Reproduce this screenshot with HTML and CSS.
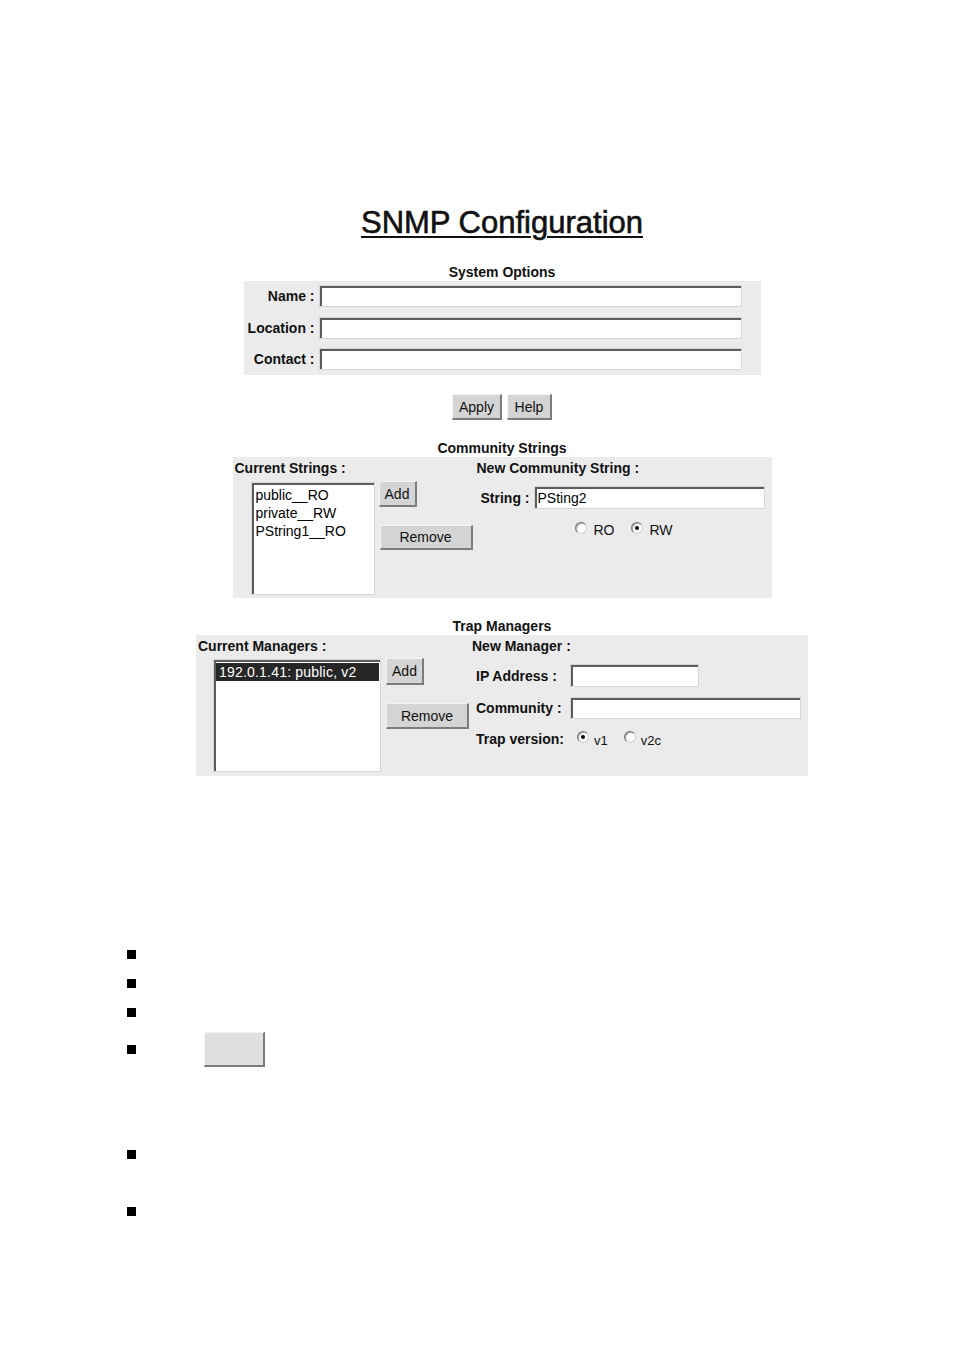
FILE: index.html
```html
<!DOCTYPE html>
<html>
<head>
<meta charset="utf-8">
<title>SNMP Configuration</title>
<link rel="stylesheet" href="styles.css">
</head>
<body>
<div class="page">
  <h1 class="title">SNMP Configuration</h1>

  <h2 class="sec-title sec-sys">System Options</h2>
  <div class="panel panel-sys">
    <label class="lbl lbl-right">Name :</label><input class="field" type="text">
    <label class="lbl lbl-right">Location :</label><input class="field" type="text">
    <label class="lbl lbl-right">Contact :</label><input class="field" type="text">
  </div>

  <div class="actions">
    <button class="btn btn-apply">Apply</button>
    <button class="btn btn-help">Help</button>
  </div>

  <h2 class="sec-title sec-comm">Community Strings</h2>
  <div class="panel panel-comm">
    <div class="col">
      <div class="col-head head-left">Current Strings :</div>
      <div class="list-row list-row-comm">
        <div class="listbox lb-strings">
          <div class="opt">public__RO</div>
          <div class="opt">private__RW</div>
          <div class="opt">PString1__RO</div>
        </div>
        <div class="btn-col btn-col-comm">
          <button class="btn btn-add">Add</button>
          <button class="btn btn-remove-comm">Remove</button>
        </div>
      </div>
    </div>
    <div class="col">
      <div class="col-head">New Community String :</div>
      <div class="field-row">
        <label class="lbl">String :</label>
        <input class="field field-string" type="text" value="PSting2">
      </div>
      <div class="radio-row">
        <span class="radio-opt"><span class="radio"></span><span class="rtext">RO</span></span>
        <span class="radio-opt"><span class="radio on"></span><span class="rtext">RW</span></span>
      </div>
    </div>
  </div>

  <h2 class="sec-title sec-trap">Trap Managers</h2>
  <div class="panel panel-trap">
    <div class="col">
      <div class="col-head head-left">Current Managers :</div>
      <div class="list-row list-row-trap">
        <div class="listbox lb-managers">
          <div class="opt selected">192.0.1.41: public, v2</div>
        </div>
        <div class="btn-col btn-col-trap">
          <button class="btn btn-add btn-add-trap">Add</button>
          <button class="btn btn-remove-trap">Remove</button>
        </div>
      </div>
    </div>
    <div class="col">
      <div class="col-head">New Manager :</div>
      <div class="trow trow-ip">
        <label class="lbl tlbl">IP Address :</label>
        <input class="field field-ip" type="text">
      </div>
      <div class="trow trow-comm">
        <label class="lbl tlbl">Community :</label>
        <input class="field field-comm" type="text">
      </div>
      <div class="trow trow-ver">
        <label class="lbl tlbl">Trap version:</label>
        <span class="ver-radios">
          <span class="radio-opt small"><span class="radio on"></span><span class="rtext vtext">v1</span></span>
          <span class="radio-opt small"><span class="radio"></span><span class="rtext vtext">v2c</span></span>
        </span>
      </div>
    </div>
  </div>
</div>

<ul class="bullets">
  <li class="b1"><span class="sq"></span></li>
  <li class="b2"><span class="sq"></span></li>
  <li class="b3"><span class="sq"></span></li>
  <li class="b4"><span class="sq"></span><span class="blank-btn"></span></li>
  <li class="b5"><span class="sq"></span></li>
  <li class="b6"><span class="sq"></span></li>
</ul>
</body>
</html>
```

FILE: styles.css
```css
html, body {
  margin: 0;
  padding: 0;
  background: #ffffff;
}
body {
  font-family: "Liberation Sans", Arial, sans-serif;
  color: #000;
  font-size: 14px;
}

.page {
  width: 612px;
  margin-left: 196px;
  padding-top: 205px;
}

.title {
  margin: 0;
  font-size: 31px;
  font-weight: normal;
  line-height: 36px;
  text-align: center;
  text-decoration: underline;
  text-decoration-thickness: 2px;
  text-underline-offset: 3px;
  color: #111;
  -webkit-text-stroke: 0.6px #111;
}

.sec-title {
  margin: 0;
  font-size: 14px;
  font-weight: bold;
  line-height: 18px;
  text-align: center;
  color: #111;
}
.sec-sys { margin-top: 22px; }
.sec-comm { margin-top: 19px; }
.sec-trap { margin-top: 19px; }

.panel {
  background: #ebebeb;
  margin: 0 auto;
  box-sizing: border-box;
}

.lbl {
  font-weight: bold;
  font-size: 14px;
  line-height: 16px;
  white-space: nowrap;
  color: #111;
}
.lbl-right { text-align: right; }

.field {
  box-sizing: border-box;
  margin: 0;
  padding: 0 0 0 3px;
  background: #fff;
  border: 1px solid #d6d6d6;
  box-shadow: inset 2px 2px 0 #5c5c5c;
  font-family: "Liberation Sans", Arial, sans-serif;
  font-size: 14px;
  color: #000;
  outline: none;
  border-radius: 0;
}

/* System options */
.panel-sys {
  width: 517px;
  height: 94px;
  display: grid;
  grid-template-columns: 71px 423px;
  grid-auto-rows: 22px;
  column-gap: 4px;
  row-gap: 9.5px;
  padding: 4px 0 5px 0;
  align-items: center;
}
.panel-sys .field { height: 22px; width: 423px; }

/* Buttons */
.actions {
  display: flex;
  justify-content: center;
  gap: 5px;
  margin-top: 19px;
}
.btn {
  box-sizing: border-box;
  margin: 0;
  padding: 0;
  height: 26px;
  background: #d4d4d4;
  border-top: 1px solid #f4f4f4;
  border-left: 1px solid #f4f4f4;
  border-right: 2px solid #7c7c7c;
  border-bottom: 2px solid #7c7c7c;
  border-radius: 0;
  font-family: "Liberation Sans", Arial, sans-serif;
  font-size: 14px;
  color: #111;
  display: inline-flex;
  align-items: center;
  justify-content: center;
}
.btn-apply { width: 50px; }
.btn-help { width: 45px; }
.btn-add { width: 38px; height: 26px; }
.btn-add-trap { height: 27px; }
.btn-remove-comm { width: 93px; height: 25px; margin-left: 1px; }
.btn-remove-trap { width: 83px; height: 26px; }

/* Community / Trap panels */
.panel-comm {
  width: 539px;
  height: 141px;
  display: grid;
  grid-template-columns: 244px 1fr;
  padding: 3px 0 3px 0;
}
.panel-trap {
  width: 612px;
  height: 141px;
  display: grid;
  grid-template-columns: 276px 1fr;
  padding: 3px 0 4px 0;
}

.col-head {
  font-weight: bold;
  font-size: 14px;
  line-height: 17px;
  white-space: nowrap;
  color: #111;
}
.head-left { padding-left: 2px; }

.list-row {
  display: flex;
  align-items: flex-start;
}
.list-row-comm { margin-top: 5px; padding-left: 18px; }
.list-row-trap { margin-top: 4px; padding-left: 17px; }

.listbox {
  box-sizing: border-box;
  background: #fff;
  border: 1px solid #d6d6d6;
  box-shadow: inset 2px 2px 0 #5c5c5c;
  padding: 3px 1px 1px 2px;
  overflow: hidden;
}
.lb-strings { width: 124px; height: 113px; }
.lb-managers { width: 168px; height: 113px; padding-top: 3px; }

.opt {
  font-size: 14px;
  line-height: 18px;
  padding: 0 2px;
  white-space: nowrap;
}
.lb-managers .opt { padding: 0 3px; letter-spacing: 0.2px; }
.opt.selected {
  background: #262626;
  color: #fff;
}

.btn-col {
  display: flex;
  flex-direction: column;
  align-items: flex-start;
  gap: 18px;
  margin-top: -1px;
}
.btn-col-comm { margin-left: 4px; }
.btn-col-trap { margin-left: 5px; }

.field-row {
  display: flex;
  align-items: center;
  gap: 4px;
  margin-top: 9px;
  padding-left: 4px;
}
.field-string { width: 231px; height: 23px; }

.radio-row {
  display: flex;
  justify-content: center;
  gap: 17px;
  margin-top: 13px;
  line-height: 16px;
}
.radio-opt {
  display: inline-flex;
  align-items: center;
  gap: 6px;
}
.radio-opt.small { gap: 5px; }
.radio {
  position: relative;
  box-sizing: border-box;
  width: 12px;
  height: 12px;
  border-radius: 50%;
  background: #fff;
  border: 1px solid;
  border-color: #707070 #cfcfcf #cfcfcf #707070;
  box-shadow: inset 1px 1px 0 #a8a8a8;
  margin-bottom: 4px;
  flex: none;
}
.radio.on::after {
  content: "";
  position: absolute;
  left: 3px;
  top: 3px;
  width: 4px;
  height: 4px;
  border-radius: 50%;
  background: #000;
}
.rtext { font-size: 14px; color: #111; }
.vtext { font-size: 13px; margin-top: 3px; }

.trow {
  display: flex;
  align-items: center;
  padding-left: 4px;
}
.tlbl { width: 94px; }
.trow-ip { margin-top: 9px; }
.trow-comm { margin-top: 10px; }
.trow-ver { margin-top: 12px; height: 16px; }
.field-ip { width: 129px; height: 23px; }
.field-comm { width: 231px; height: 22px; }
.ver-radios {
  display: inline-flex;
  gap: 16px;
  padding-left: 7px;
}

/* Bullets */
.bullets {
  list-style: none;
  margin: 163.5px 0 0 0;
  padding: 0 0 0 127px;
}
.bullets li {
  display: flex;
  align-items: center;
  height: 29px;
}
.sq {
  width: 9px;
  height: 9px;
  background: #000;
  flex: none;
}
.bullets li.b4 { height: 35px; margin-top: 5.5px; }
.bullets li.b5 { margin-top: 72.5px; }
.bullets li.b6 { margin-top: 28px; }
.blank-btn {
  box-sizing: border-box;
  width: 61px;
  height: 35px;
  margin-left: 68px;
  background: #e0e0e0;
  border-top: 1px solid #f2f2f2;
  border-left: 1px solid #f2f2f2;
  border-right: 2px solid #7a7a7a;
  border-bottom: 2px solid #7a7a7a;
}
```
